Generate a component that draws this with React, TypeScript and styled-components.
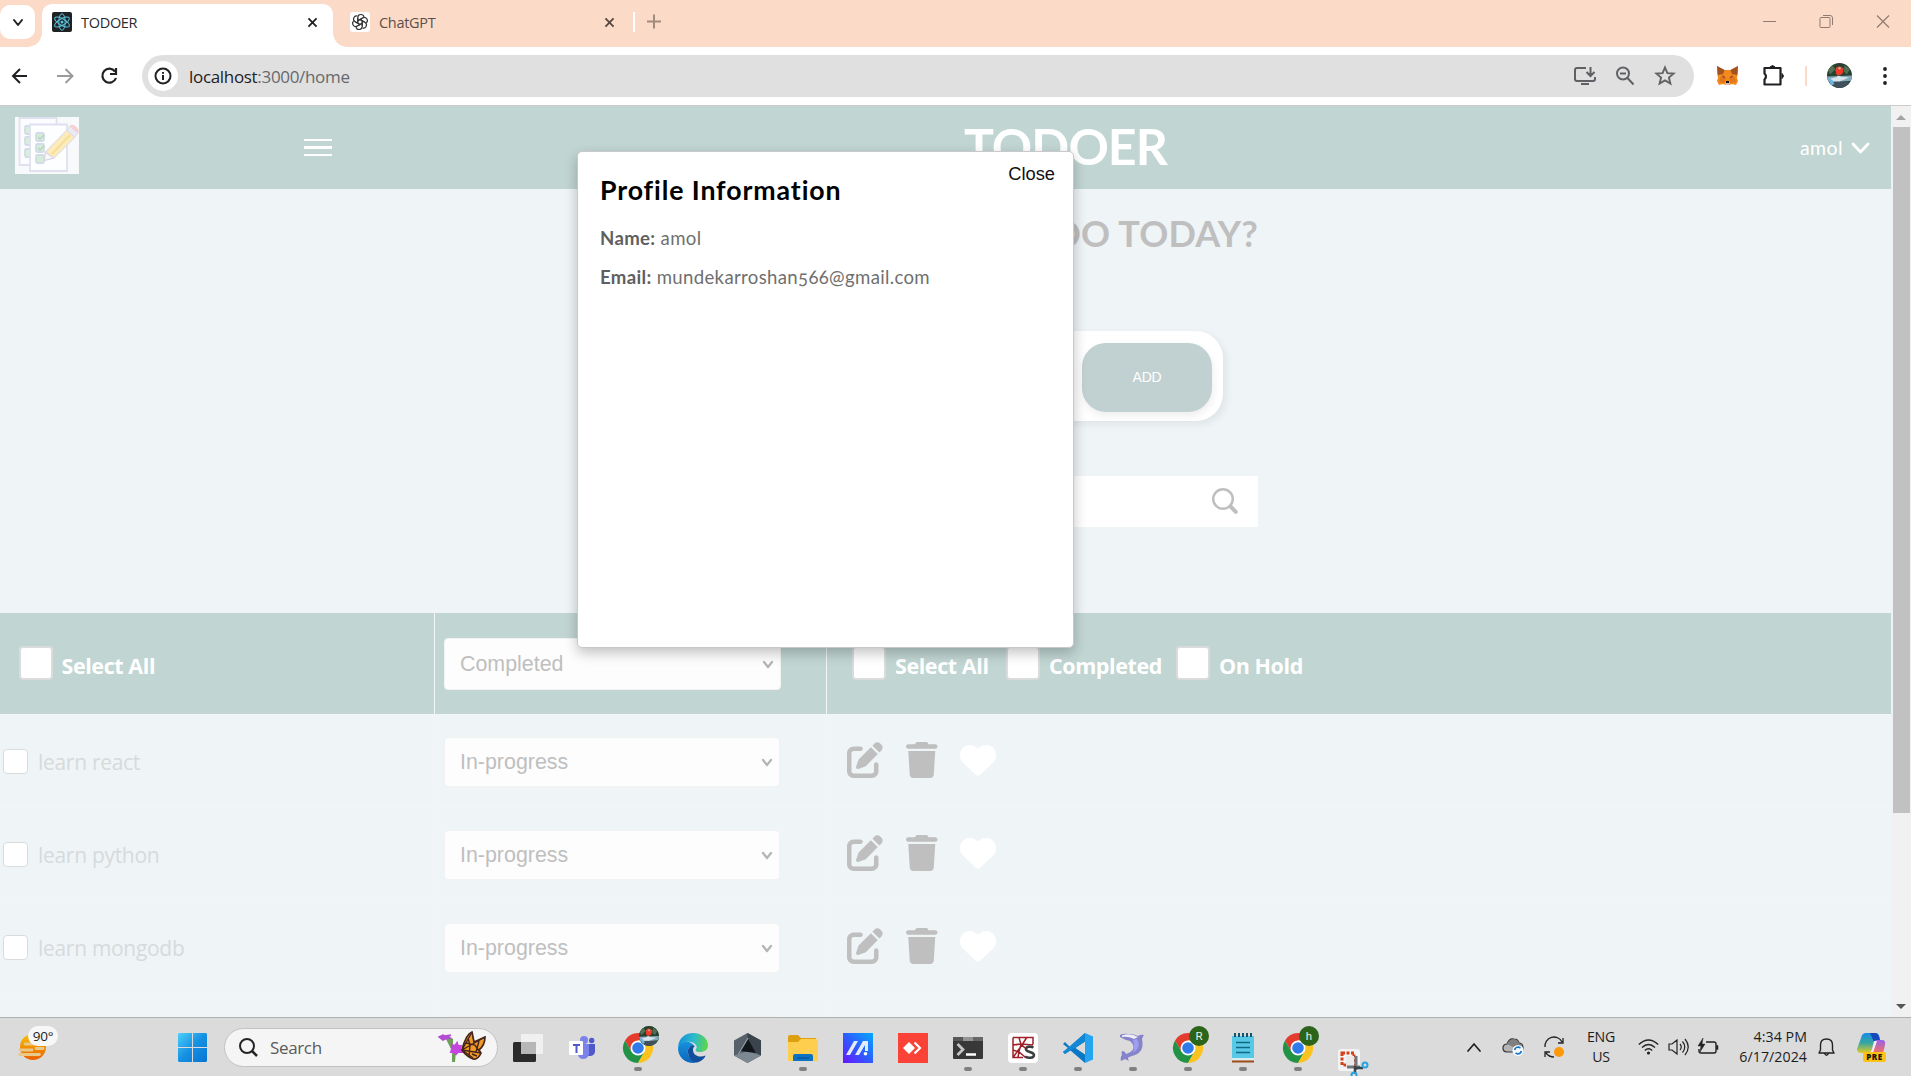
import React from "react";
import styled, { createGlobalStyle } from "styled-components";
import { FaPenToSquare, FaTrash, FaHeart } from "react-icons/fa6";

const ui = `"Open Sans", "Noto Sans", sans-serif`;
const brand = `Lato, "Open Sans", sans-serif`;
const arial = `"Liberation Sans", Arial, sans-serif`;

const GlobalStyle = createGlobalStyle`
  * { box-sizing: border-box; }
  html, body { margin: 0; padding: 0; overflow: hidden; }
  h1, h2, p { margin: 0; }
  svg { display: block; flex: none; overflow: visible; }
`;

const Screen = styled.div`
  width: 1911px;
  height: 1076px;
  display: flex;
  flex-direction: column;
  overflow: hidden;
  background: #fff;
  font-family: ${ui};
`;

/* ---------- Browser chrome ---------- */

const TabStrip = styled.div`
  height: 47px;
  flex: none;
  display: flex;
  align-items: flex-start;
  background: #fcdac8;
`;

const TabMenu = styled.div`
  width: 35px;
  height: 34px;
  margin: 5px 7px 0 0;
  border-radius: 10px;
  background: #fff;
  display: flex;
  align-items: center;
  justify-content: center;
`;

const Tab = styled.div<{ $active?: boolean }>`
  position: relative;
  width: ${(p) => (p.$active ? 291 : 300)}px;
  height: 43px;
  margin-top: 4px;
  padding: 0 ${(p) => (p.$active ? 16 : 19)}px 7px ${(p) => (p.$active ? 10 : 17)}px;
  display: flex;
  align-items: center;
  gap: 9px;
  border-radius: 10px 10px 0 0;
  background: ${(p) => (p.$active ? "#fff" : "transparent")};
  color: ${(p) => (p.$active ? "#2a2a2d" : "#5c4f48")};
  font-size: 14.5px;
  letter-spacing: -0.3px;

  &::before,
  &::after {
    content: ${(p) => (p.$active ? '""' : "none")};
    position: absolute;
    bottom: 0;
    width: 14px;
    height: 14px;
  }
  &::before {
    left: -14px;
    background: radial-gradient(circle at 0 0, transparent 13.5px, #fff 14px);
  }
  &::after {
    right: -14px;
    background: radial-gradient(circle at 100% 0, transparent 13.5px, #fff 14px);
  }
`;

const TabTitle = styled.span`
  flex: 1;
`;

const TabDivider = styled.div`
  width: 2px;
  height: 20px;
  margin: 12px 12px 0 0;
  background: #fff;
`;

const NewTab = styled.div`
  padding-top: 14px;
`;

const WindowButtons = styled.div`
  margin-left: auto;
  padding: 14px 21px 0 0;
  display: flex;
  gap: 42px;
`;

const Toolbar = styled.div`
  height: 59px;
  flex: none;
  display: flex;
  align-items: center;
  padding: 0 17px 1px 8px;
  border-bottom: 1px solid #c9cccb;
  background: #fff;
`;

const NavButtons = styled.div`
  width: 134px;
  display: flex;
  gap: 20.5px;
`;

const AddressBar = styled.div`
  width: 1552px;
  height: 42px;
  padding: 0 18px 0 6px;
  border-radius: 21px;
  background: #e0e0e0;
  display: flex;
  align-items: center;
`;

const InfoBadge = styled.div`
  width: 30px;
  height: 30px;
  border-radius: 50%;
  margin-right: 11px;
  background: #fff;
  display: flex;
  align-items: center;
  justify-content: center;
`;

const Url = styled.span`
  flex: 1;
  padding-top: 2px;
  font-size: 17px;
  letter-spacing: -0.32px;
  color: #1f2023;
  span { color: #66696d; }
`;

const AddressIcons = styled.div`
  display: flex;
  align-items: center;
  gap: 19px;
`;

const Extensions = styled.div`
  flex: 1;
  padding-left: 23px;
  display: flex;
  align-items: center;
`;

const ExtensionDivider = styled.div`
  width: 2px;
  height: 20px;
  margin: 0 20px 0 21px;
  background: #fcdac8;
`;

const Spacer = styled.div<{ $w: number }>`
  flex: none;
  width: ${(p) => p.$w}px;
`;

/* ---------- Page ---------- */

const Viewport = styled.div`
  position: relative;
  height: 911px;
  flex: none;
  display: flex;
  overflow: hidden;
  background: #eff4f7;
`;

const Page = styled.main`
  width: 1891px;
  height: 911px;
  overflow: hidden;
`;

const Header = styled.header`
  height: 83px;
  display: flex;
  align-items: center;
  padding: 0 22px 4px 15px;
  background: #c1d5d2;
  color: #fff;
`;

const Menu = styled.div`
  width: 28px;
  height: 17px;
  margin: 4px 0 0 225px;
  border: solid #fff;
  border-width: 2px 0;
  display: flex;
  align-items: center;
  &::after {
    content: "";
    width: 28px;
    height: 3px;
    background: #fff;
  }
`;

const Brand = styled.h1`
  margin-left: 632px;
  font: 700 50px/60px ${brand};
  letter-spacing: -0.95px;
  white-space: nowrap;
`;

const Account = styled.div`
  margin-left: auto;
  display: flex;
  align-items: center;
  gap: 9px;
  padding-top: 4px;
  font: 400 19.5px/24px ${brand};
  letter-spacing: 0.4px;
`;

const Intro = styled.section`
  height: 424px;
  padding-right: 633px;
  display: flex;
  flex-direction: column;
  align-items: flex-end;
`;

const Prompt = styled.h2`
  margin: 22px 0 75px 0;
  font: 700 36px/45px ${brand};
  letter-spacing: 0.2px;
  color: #bfbfbf;
`;

const AddBar = styled.div`
  width: 560px;
  height: 90px;
  margin-right: 35px;
  padding: 12px 11px 0 0;
  display: flex;
  justify-content: flex-end;
  align-items: flex-start;
  border-radius: 27px;
  background: #fff;
  box-shadow: 3px 3px 9px rgba(0, 0, 0, 0.07);
`;

const AddButton = styled.button`
  width: 130px;
  height: 69px;
  padding: 0 0 2px;
  border: 0;
  border-radius: 24px;
  background: #c1d0d0;
  box-shadow: 1px 4px 8px rgba(0, 0, 0, 0.07);
  color: #fff;
  font: 400 14px ${arial};
  letter-spacing: -0.2px;
`;

const SearchField = styled.div`
  width: 620px;
  height: 51px;
  margin-top: 55px;
  padding: 12px 20px 0 0;
  display: flex;
  justify-content: flex-end;
  background: #fff;
`;

const Grid = styled.div<{ $head?: boolean }>`
  height: ${(p) => (p.$head ? 101.5 : 93)}px;
  display: grid;
  grid-template-columns: 435px 392px 1064px;
  background: ${(p) => (p.$head ? "#c1d5d2" : "transparent")};
  border-bottom: 1px solid ${(p) => (p.$head ? "#f5f7f7" : "#f3f5f7")};
`;

const Cell = styled.div<{ $pad: string; $gap?: number; $line?: string }>`
  display: flex;
  align-items: flex-start;
  gap: ${(p) => p.$gap || 0}px;
  padding: ${(p) => p.$pad};
  border-right: ${(p) => (p.$line ? `1px solid ${p.$line}` : "0")};
`;

const Check = styled.span<{ $size: number }>`
  flex: none;
  width: ${(p) => p.$size}px;
  height: ${(p) => p.$size}px;
  border: ${(p) => (p.$size > 30 ? 2 : 1.5)}px solid #dadcdc;
  border-radius: 4px;
  background: #fff;
`;

const HeadLabel = styled.label<{ $w: number }>`
  width: ${(p) => p.$w}px;
  padding-top: 5px;
  font: 700 21.5px/30px ${ui};
  letter-spacing: -0.42px;
  color: #fff;
  white-space: nowrap;
`;

const TaskName = styled.span`
  font: 400 21px/26px ${ui};
  letter-spacing: -0.3px;
  color: #d7dadb;
`;

const Dropdown = styled.div<{ $head?: boolean }>`
  width: ${(p) => (p.$head ? 337 : 336)}px;
  height: ${(p) => (p.$head ? 52 : 50)}px;
  padding: ${(p) => (p.$head ? 0 : 1)}px 7px 0 15px;
  border: 1px solid #f1f3f3;
  border-radius: 4px;
  background: #fdfdfd;
  display: flex;
  align-items: center;
  justify-content: space-between;
  color: #bfbfbf;
  font: 400 21.4px ${arial};
`;

const PenIcon = styled(FaPenToSquare)`
  width: 36px;
  height: 36px;
  color: #bfbfbf;
`;

const TrashIcon = styled(FaTrash)`
  width: 31.5px;
  height: 36px;
  color: #bfbfbf;
`;

const HeartIcon = styled(FaHeart)`
  width: 36px;
  height: 36px;
  color: #fff;
`;

const ScrollTrack = styled.div`
  width: 20px;
  display: flex;
  flex-direction: column;
  align-items: center;
  background: #f1f1f1;
`;

const ScrollArrow = styled.div<{ $down?: boolean }>`
  width: 0;
  height: 0;
  margin: ${(p) => (p.$down ? "191px 0 0" : "9px 0 7px")};
  border: solid transparent;
  border-width: ${(p) => (p.$down ? "5px 5px 0" : "0 5px 5px")};
  border-top-color: ${(p) => (p.$down ? "#555" : "transparent")};
  border-bottom-color: ${(p) => (p.$down ? "transparent" : "#a3a3a3")};
`;

const ScrollThumb = styled.div`
  width: 17px;
  height: 686px;
  background: #c1c1c1;
`;

/* ---------- Profile dialog ---------- */

const Dialog = styled.section`
  position: absolute;
  left: 577px;
  top: 45px;
  width: 497px;
  height: 497px;
  padding: 22px;
  border: 1px solid #c9c9c9;
  border-radius: 5px;
  background: #fff;
  box-shadow: 0 5px 13px rgba(0, 0, 0, 0.24);
`;

const DialogTitle = styled.h2`
  font: 700 26.7px/33px ${brand};
  letter-spacing: 0.9px;
  color: #000;
  margin-bottom: 18px;
`;

const Detail = styled.p`
  margin-bottom: 13px;
  font: 400 18.6px/26px ${brand};
  font-variant-numeric: oldstyle-nums;
  letter-spacing: 0.33px;
  color: #6f6f6f;
  b { font-weight: 700; color: #5f5f5f; }
`;

const CloseButton = styled.button`
  position: absolute;
  top: 10px;
  right: 18px;
  padding: 0;
  border: 0;
  background: none;
  color: #111;
  font: 400 18.3px/24px ${arial};
`;

/* ---------- Taskbar ---------- */

const Taskbar = styled.footer`
  height: 59px;
  flex: none;
  display: flex;
  align-items: center;
  border-top: 1px solid #aeb0b1;
  background: #dbdbdb;
  color: #1d1d1d;
`;

const Weather = styled.div`
  position: relative;
  width: 160px;
  height: 58px;
  padding: 16px 0 0 18px;
  margin-right: 18px;
`;

const Temperature = styled.span`
  position: absolute;
  left: 28px;
  top: 8px;
  width: 30px;
  height: 20px;
  border-radius: 10px;
  background: #f7f7f7;
  font-size: 13.5px;
  line-height: 20px;
  letter-spacing: -0.3px;
  text-align: center;
`;

const TaskSearch = styled.div`
  width: 274px;
  height: 39px;
  margin: 0 2px 0 17px;
  padding: 0 11px 0 14px;
  border: 1px solid #c2c2c2;
  border-radius: 20px;
  background: #f5f5f5;
  display: flex;
  align-items: center;
  font-size: 17px;
  letter-spacing: -0.35px;
  color: #5b5b5b;
  span { flex: 1; padding-left: 12px; }
`;

const TaskItem = styled.div<{ $running?: boolean; $low?: boolean }>`
  position: relative;
  width: 55px;
  height: 58px;
  flex: none;
  display: flex;
  justify-content: center;
  padding-top: ${(p) => (p.$low ? 31 : 15)}px;
  &::after {
    content: ${(p) => (p.$running ? '""' : "none")};
    position: absolute;
    bottom: 5px;
    width: 8px;
    height: 4px;
    border-radius: 2px;
    background: #808080;
  }
`;

const ProfileBadge = styled.span`
  position: absolute;
  right: 6px;
  top: 8px;
  width: 20px;
  height: 20px;
  border-radius: 50%;
  background: #2c651a;
  color: #e8f0e4;
  font: 400 11.5px/20px "Roboto", sans-serif;
  text-align: center;
`;

const Tray = styled.div`
  margin-left: auto;
  padding-right: 24px;
  display: flex;
  align-items: center;
`;

const TrayText = styled.div<{ $right?: boolean; $w: number }>`
  width: ${(p) => p.$w}px;
  font-size: 14.2px;
  line-height: 20px;
  letter-spacing: ${(p) => (p.$right ? 0.05 : -0.3)}px;
  text-align: ${(p) => (p.$right ? "right" : "center")};
  white-space: nowrap;
`;

/* ---------- Drawings ---------- */

const CloseX = ({ color, size = 9, w = 2 }: { color: string; size?: number; w?: number }) => (
  <svg width={size} height={size} viewBox="0 0 10 10" stroke={color} strokeWidth={w}>
    <path d="M.5.5l9 9M9.5.5l-9 9" />
  </svg>
);

const ReactMark = () => (
  <svg width="20" height="20" viewBox="0 0 20 20" fill="none" stroke="#58c4dc" strokeWidth="1">
    <rect width="20" height="20" rx="2" fill="#202124" stroke="none" />
    {[0, 60, 120].map((a) => (
      <ellipse key={a} cx="10" cy="10" rx="8.3" ry="3.2" transform={`rotate(${a + 30} 10 10)`} />
    ))}
    <circle cx="10" cy="10" r="1.5" fill="#58c4dc" stroke="none" />
  </svg>
);

const ChatMark = () => (
  <svg width="20" height="20" viewBox="0 0 20 20" fill="none" stroke="#333" strokeWidth="1.15">
    <rect width="20" height="20" rx="3" fill="#fff" stroke="none" />
    {[0, 60, 120, 180, 240, 300].map((a) => (
      <path key={a} transform={`rotate(${a} 10 10)`} d="M7.8 11.3V5.7c0-4 5.4-4.2 6.1-.8M7.8 8.7l4.8-2.8" />
    ))}
  </svg>
);

const Avatar = ({ size }: { size: number }) => (
  <svg width={size} height={size} viewBox="0 0 24 24">
    <clipPath id="avatarClip"><circle cx="12" cy="12" r="12" /></clipPath>
    <g clipPath="url(#avatarClip)">
      <rect width="24" height="24" fill="#27402f" />
      <path d="M0 5l5-3 3 4-5 5zM17 2l5 4-3 5-3-3z" fill="#4f7055" />
      <path d="M0 13l24-1v5l-24 2z" fill="#86a9bb" />
      <path d="M3 15l8-2 10 1-7 3-10 1z" fill="#d4e4ee" />
      <path d="M2 18h20v6H2z" fill="#40505c" />
      <path d="M1 15l4 1 2 4-3 2z" fill="#6cb2dc" />
      <path d="M9 4l3-1 4 2-1 5-3 2-3-1-1-4z" fill="#ee3a26" />
      <circle cx="12" cy="5" r="1.2" fill="#b4b3a6" />
      <path d="M10 12l3 1-1 5-2-1z" fill="#dce5ea" />
    </g>
  </svg>
);

const Fox = () => (
  <svg width="21" height="19" viewBox="0 0 21 19">
    <path d="M0 0l7.5 4h6L21 0v7l-1 5 1 3-2 4-4-1-3 1H9l-3-1-4 1-2-4 1-3-1-5z" fill="#f28a1d" />
    <path d="M0 0l7.5 4-1.5 4-5 1zM21 0l-7.5 4L15 8l5 1z" fill="#a2521f" />
    <path d="M6 8l3 4-1 5-6-1 1-4zM15 8l-3 4 1 5 6-1-1-4z" fill="#e5761b" />
    <path d="M5 10l3 1-1 1zM16 10l-3 1 1 1z" fill="#493a38" />
    <path d="M8 17l1-2h3l1 2-1 2H9z" fill="#d5bfb2" />
    <path d="M9 15h3v2H9z" fill="#161616" />
  </svg>
);

const NotebookLogo = () => (
  <svg width="64" height="57" viewBox="0 0 64 57" fill="none" stroke="#e0e0f1" strokeWidth="1.8">
    <rect width="64" height="57" fill="#f8f9fa" stroke="none" />
    <path d="M4.500 1h37v47h-37z" fill="#fbfcff" />
    {[9, 20, 32].map((y) => <rect key={y} x="10" y={y} width="7" height="8" rx="1.500" fill="#d8f0da" stroke="#d3dae8" />)}
    <path d="M15 7.500h37v46.500H15z" fill="#fdfeff" />
    {[16, 27, 38].map((y, i) => (
      <g key={y}>
        <rect x="21" y={y} width="8" height="8" rx="1.500" fill="#d4eed6" stroke="#d3dae8" />
        {i < 2 && <path d="M23 4l2 2 4-4" transform={`translate(0 ${y})`} stroke="#b9d3c0" strokeWidth="1.500" />}
      </g>
    ))}
    <path d="M30.500 35L52 13l8 7-21 21-9 2z" fill="#fdebb8" stroke="#e6dfe0" strokeWidth="1.200" />
    <path d="M52 13l3-4 8 7-3.500 4z" fill="#ebeaf5" stroke="#dbdaeb" strokeWidth="1" />
    <path d="M55 9q3-2 6 1t2 6z" fill="#fbd0cd" stroke="#ecd2da" strokeWidth="1" />
    <path d="M37 37l18-19" stroke="#f6de9d" strokeWidth="2.200" />
    <path d="M30.500 35l8 6-9 2.500z" fill="#fdf8f3" stroke="#d8d6ea" strokeWidth="1.200" />
  </svg>
);

const Chevron = ({ w, h, color, stroke, up }: { w: number; h: number; color: string; stroke: number; up?: boolean }) => (
  <svg width={w} height={h} fill="none" stroke={color} strokeWidth={stroke} strokeLinecap="round" strokeLinejoin="round">
    <path d={up ? `M1 ${h - 1}L${w / 2} 1L${w - 1} ${h - 1}` : `M1 1L${w / 2} ${h - 1}L${w - 1} 1`} />
  </svg>
);

const ChromeLogo = () => (
  <svg width="30" height="30" viewBox="0 0 30 30">
    <path d="M2 7.5A15 15 0 0 1 28 7.5H15L8.5 18.7z" fill="#e33b2e" />
    <path d="M2 7.5A15 15 0 0 0 15 30l6.5-11.2h-13z" fill="#229346" />
    <path d="M28 7.5A15 15 0 0 1 15 30l6.500-11.200L15 7.500z" fill="#fcc31e" />
    <circle cx="15" cy="15" r="7.5" fill="#fff" />
    <circle cx="15" cy="15" r="5.8" fill="#2f7bea" />
  </svg>
);

const EdgeLogo = () => (
  <svg width="30" height="30" viewBox="0 0 30 30">
    <defs>
      <linearGradient id="edgeTop" x1="0" y1=".4" x2="1" y2=".5">
        <stop stopColor="#138fd8" /><stop offset=".5" stopColor="#2cb9ce" /><stop offset="1" stopColor="#5ed749" />
      </linearGradient>
      <linearGradient id="edgeLeft" x1="0" y1="0" x2="0" y2="1">
        <stop stopColor="#1592dc" /><stop offset="1" stopColor="#0b65bb" />
      </linearGradient>
    </defs>
    <path d="M0 14C1 5 7 0 15 0c9 0 15 6 15 12 0 5-4 7-8 7-4 0-5-1-4-3 2-2 0-6-5-7C7 8 2 10 0 14z" fill="url(#edgeTop)" />
    <path d="M0 15C1 10 6 8 11 9c3 1 5 3 6 5-4-3-8 1-7 6 1 5 4 8 8 10C8 31 0 25 0 15z" fill="url(#edgeLeft)" />
    <path d="M14 12.500c-3 1-4.500 4-4 7.500 1 6 5 10 9 9.500 4.500-1 8-4.500 8.500-7-5 2.500-12.500.5-12.500-5.500 0-2 .5-3 1.500-4z" fill="#104f9c" />
  </svg>
);

const TaskViewIcon = () => (
  <svg width="30" height="30" viewBox="0 0 30 30">
    <rect y="9" width="23" height="20" rx="1.5" fill="#2b2b2b" />
    <rect x="8" y="1" width="22" height="20" rx="1" fill="#f0f0f0" />
    <path d="M8 9h15v12H9q-1 0-1-1z" fill="#b7b7b7" />
  </svg>
);

const TeamsIcon = () => (
  <svg width="27" height="30" viewBox="0 0 27 30">
    <circle cx="15" cy="7" r="4" fill="#7b83eb" />
    <circle cx="22.7" cy="7.5" r="2.7" fill="#5059c9" />
    <path d="M19 11h7v8q-1 4-5 4h-2z" fill="#5059c9" />
    <path d="M9 11h11v10q-1 5-6 5-4 0-5-4z" fill="#7b83eb" />
    <rect y="8" width="14" height="14" rx="1" fill="#fff" />
    <path d="M4 11h7v2H8.5v7h-2v-7H4z" fill="#5059c9" />
  </svg>
);

const ArmouryIcon = () => (
  <svg width="27" height="30" viewBox="0 0 27 30">
    <path d="M13.5 0L27 7.5v15L13.5 30 0 22.5v-15z" fill="#56616b" />
    <path d="M13.5 0L27 7.500v15L13.500 15z" fill="#3b444c" />
    <path d="M0 22.500l13.500-4.500L27 22.500 13.500 30z" fill="#7c8892" />
    <path d="M14 6l8 14-16-2z" fill="#12171c" />
    <path d="M14 5L4.500 21" stroke="#8d99a3" strokeWidth="1.300" />
  </svg>
);

const FolderIcon = () => (
  <svg width="30" height="30" viewBox="0 0 30 30">
    <path d="M0 4q0-2 2-2h8l3 3h15v6H0z" fill="#dda011" />
    <path d="M0 9h10l3-3h15q2 0 2 2v20H0z" fill="#fecf4e" />
    <path d="M5 28v-5q0-2 2-2h16q2 0 2 2v5z" fill="#0c72c4" />
    <path d="M9 25h12" stroke="#064b91" />
  </svg>
);

const AsusIcon = () => (
  <svg width="30" height="30" viewBox="0 0 30 30">
    <defs><linearGradient id="asus" x1="0" y1="1" x2="1" y2="0"><stop stopColor="#6815ff" /><stop offset=".55" stopColor="#2865ff" /><stop offset="1" stopColor="#05a9ff" /></linearGradient></defs>
    <rect width="30" height="30" fill="url(#asus)" />
    <path d="M3 22L11 8h4L7 22zM12 22l8-14h5v10h-3v-6l-6 10z" fill="#e2ebff" />
    <circle cx="22.5" cy="20.7" r="1.8" fill="#fff" />
  </svg>
);

const AnyDeskIcon = () => (
  <svg width="30" height="30" viewBox="0 0 30 30">
    <rect width="30" height="30" fill="#fb4237" />
    <path d="M5 15l6-6 6 6-6 6z" fill="#fff" />
    <path d="M16.500 9.500L22 15l-5.500 5.500" stroke="#fff" strokeWidth="2.200" fill="none" />
  </svg>
);

const TerminalIcon = () => (
  <svg width="30" height="30" viewBox="0 0 30 30">
    <rect y="4" width="30" height="22" rx="1" fill="#383838" />
    <path d="M0 5q0-1 1-1h9v4H0z" fill="#585858" /><path d="M10 4h10v4H10z" fill="#949494" /><path d="M20 4h10v4H20z" fill="#676767" />
    <path d="M4.500 11l5.500 5.500L4.500 22" fill="none" stroke="#c6c6c6" strokeWidth="2.700" />
    <path d="M13 21.500h10" stroke="#fff" strokeWidth="2.500" />
  </svg>
);

const SpyderIcon = () => (
  <svg width="30" height="30" viewBox="0 0 30 30" fill="none">
    <rect width="30" height="30" rx="4" fill="#fff" />
    <path d="M5 4.500h20v7M5 4.500v20h10M5 12l8-1 12 1M5 24.500L14 12l5-8M11 4.500l2 7-2 7-1 6M5 17l6 2 6 5M13 11l4 4" stroke="#9f2028" strokeWidth="1.500" />
    <path d="M17 13h9v12h-9z" fill="#fff" />
    <path d="M25.500 14.500c-3-1.500-8-1-7.500 2 .5 3 8 2 8 5.500s-6 3.500-9 1.500" stroke="#3b3d40" strokeWidth="2.500" />
  </svg>
);

const CodeIcon = () => (
  <svg width="30" height="30" viewBox="0 0 30 30">
    <path d="M22 0L7 14l-5-5-2 2 5 4-5 4 2 2 5-4 15 13V21.500L12.500 15 22 8.500z" fill="#0a79c5" />
    <path d="M22 0l8 3.500v23L22 30z" fill="#25a5ef" />
    <path d="M2 21l20-12.500V0L0 19z" fill="#1287d4" />
  </svg>
);

const DolphinIcon = () => (
  <svg width="25" height="30" viewBox="0 0 25 30">
    <path d="M0 2q4-2 9-1 5 0 9 2 3-2 6-1-1 1-2 4c2 9-1 15-10 17-4 1-5 2-3 5l-4-2-4 2q-1-4 1-6-1-2 0-4 3 0 4 3c8-2 10-8 4-13Q5 7 0 4z" fill="#8583cb" />
    <path d="M2 2.500q8-3 16 1.500l-4 2Q8 3 2 4z" fill="#edeef6" />
    <path d="M17 6q5 8-4 14 2-7 0-13z" fill="#9e9df0" />
  </svg>
);

const NotepadIcon = () => (
  <svg width="24" height="30" viewBox="0 0 24 30">
    <path d="M1 3h22v24H1z" fill="#57c8e5" />
    <path d="M1 25h22v2H1z" fill="#d7edf3" /><path d="M1 28.500h22" stroke="#9d4d17" strokeWidth="2" />
    <path d="M5 9.500h14M5 14.500h14M5 19.500h14" stroke="#116986" strokeWidth="1.700" />
    <path d="M4 0v4M8 0v4M12 0v4M16 0v4M20 0v4" stroke="#17546a" strokeWidth="2" />
  </svg>
);

const SnipIcon = () => (
  <svg width="30" height="28" viewBox="0 0 30 28">
    <rect x="0" y="0" width="22" height="22" rx="3" fill="#f2f3f5" />
    <rect x="4" y="4" width="12" height="12" fill="none" stroke="#d64218" strokeWidth="3" strokeDasharray="3 1.500" />
    <path d="M8 7h8v10H8z" fill="#e9e9e9" /><path d="M18 7v14M9 18h13" stroke="#70767b" strokeWidth="3" />
    <path d="M17 19h8M17 17v8" stroke="#3a4249" strokeWidth="2.500" />
    <circle cx="27" cy="16" r="2.500" fill="none" stroke="#28a2df" strokeWidth="2" /><circle cx="16" cy="26" r="2.500" fill="none" stroke="#28a2df" strokeWidth="2" />
  </svg>
);

const Butterfly = () => (
  <svg width="48" height="32" viewBox="0 0 48 32">
    <path d="M8 8q4-3 7 0v6l3 6-1 11h-3V20z" fill="#6f9e58" />
    <path d="M1 6l4-2 2 1 6-1-3 2 2 1-5 1-2 1z" fill="#b44bd4" stroke="#b44bd4" strokeWidth="1.500" />
    <path d="M14 14l3 1 2-3 1 3 3 0-1 3 2 3-4 0-2 2-2-2-3 0 1-3z" fill="#c545df" stroke="#c545df" strokeWidth="2" />
    <path d="M24 19Q28 3 34 1l2 10 11-5q0 8-6 13l2 3q-3 7-8 6-6-2-11-9z" fill="#f29a27" stroke="#45251c" strokeWidth="1.700" />
    <path d="M24 19L34 1M24 19L47 6M24 19l19 3M24 19l11 8M30 7l2 7-1 12M41 10l-3 11M28 12l9 2 4 6M34 23l5 2" stroke="#45251c" strokeWidth="1.400" fill="none" />
  </svg>
);

const SunIcon = () => (
  <svg width="28" height="28" viewBox="0 0 28 28">
    <defs><linearGradient id="sun" x1="0" y1="0" x2="0" y2="1"><stop stopColor="#fac000" /><stop offset="1" stopColor="#ea6000" /></linearGradient></defs>
    <circle cx="15" cy="13" r="13" fill="url(#sun)" />
    <path d="M7 10h12M2 16h12M18 14.500h7M1.500 20.500h20" stroke="#e9c98a" strokeWidth="2.800" strokeLinecap="round" />
  </svg>
);

const WindowsLogo = () => (
  <svg width="29" height="29" viewBox="0 0 29 29">
    <defs><linearGradient id="win" gradientUnits="userSpaceOnUse" x1="0" y1="0" x2="29" y2="29"><stop stopColor="#4ad0fb" /><stop offset=".5" stopColor="#1690e2" /><stop offset="1" stopColor="#0575d3" /></linearGradient></defs>
    <path d="M1 0h13v14H0V1zM15 0h13l1 1v13H15zM0 15h14v14H1l-1-1zM15 15h14v13l-1 1H15z" fill="url(#win)" />
  </svg>
);

const Copilot = () => (
  <svg width="30" height="29" viewBox="0 0 30 29">
    <defs>
      <linearGradient id="copA" x1="0" y1="0" x2="0" y2="1"><stop stopColor="#168ce8" /><stop offset=".5" stopColor="#36a7a1" /><stop offset="1" stopColor="#e4cb22" /></linearGradient>
      <linearGradient id="copB" x1="0" y1="0" x2="0" y2="1"><stop stopColor="#9562ea" /><stop offset="1" stopColor="#fb705d" /></linearGradient>
    </defs>
    <path d="M4 5q1-5 5-5h9q3 0 4 3l1 4q-5 0-6 4l-2 6q-1 3-4 3H4q-4 0-4-4z" fill="url(#copA)" />
    <path d="M13 0h5q3 0 4 3l1 4q-4 0-6 2z" fill="#1549bc" />
    <path d="M19 7h6q4 0 3 5l-2 8H12q2-1 3-4l2-7z" fill="url(#copB)" />
    <path d="M17 8h3l-4 12h-4q2-1 3-4z" fill="#f4e8f5" />
    <rect x="6" y="19" width="23" height="10" rx="2" fill="#fcc314" />
    <text x="17.500" y="27" textAnchor="middle" fontFamily="Open Sans" fontWeight="800" fontSize="8" letterSpacing=".6" fill="#1c1600">PRE</text>
  </svg>
);

const NavIcons = () => (
  <NavButtons>
    {["#202124", "#9b9b9b"].map((c, i) => (
      <svg key={c} width="24" height="24" viewBox="0 0 24 24" fill="none" stroke={c} strokeWidth="2">
        <path d={i ? "M4 12h15M12.500 5l7 7-7 7" : "M19 12H5M12 5l-7 7 7 7"} />
      </svg>
    ))}
    <svg width="24" height="24" viewBox="0 0 24 24" fill="none" stroke="#202124" strokeWidth="2.200">
      <path d="M18 7.500A7 7 0 1 0 19 14M19 4v6h-6" />
    </svg>
  </NavButtons>
);

const tasks = ["learn react", "learn python", "learn mongodb", ""];

const taskbarApps: { icon: React.ReactNode; running?: boolean; badge?: string; photo?: boolean; low?: boolean }[] = [
  { icon: <TaskViewIcon /> },
  { icon: <TeamsIcon /> },
  { icon: <ChromeLogo />, running: true, photo: true },
  { icon: <EdgeLogo /> },
  { icon: <ArmouryIcon /> },
  { icon: <FolderIcon />, running: true },
  { icon: <AsusIcon /> },
  { icon: <AnyDeskIcon /> },
  { icon: <TerminalIcon />, running: true },
  { icon: <SpyderIcon />, running: true },
  { icon: <CodeIcon />, running: true },
  { icon: <DolphinIcon />, running: true },
  { icon: <ChromeLogo />, running: true, badge: "R" },
  { icon: <NotepadIcon />, running: true },
  { icon: <ChromeLogo />, running: true, badge: "h" },
  { icon: <SnipIcon />, low: true },
];

export default function App() {
  return (
    <Screen>
      <GlobalStyle />
      <TabStrip>
        <TabMenu><Chevron w={10} h={7} color="#202124" stroke={2} /></TabMenu>
        <Tab $active>
          <ReactMark />
          <TabTitle>TODOER</TabTitle>
          <CloseX color="#202124" />
        </Tab>
        <Tab>
          <ChatMark />
          <TabTitle>ChatGPT</TabTitle>
          <CloseX color="#56473f" />
        </Tab>
        <TabDivider />
        <NewTab>
          <svg width="14" height="15" viewBox="0 0 14 15" stroke="#a18a7e" strokeWidth="2"><path d="M0 7.500h14M7 .5v14" /></svg>
        </NewTab>
        <WindowButtons>
          <svg width="15" height="15" stroke="#8f7b71"><path d="M1 7.500h13" /></svg>
          <svg width="15" height="15" viewBox="0 0 15 15" fill="none" stroke="#8f7b71"><rect x="1" y="3.500" width="10" height="10" rx="1" /><path d="M4 1.500h7q2.500 0 2.500 2.500v7" /></svg>
          <svg width="14" height="15" stroke="#8f7b71" strokeWidth="1.200"><path d="M1 1.500l12 12M13 1.500l-12 12" /></svg>
        </WindowButtons>
      </TabStrip>

      <Toolbar>
        <NavIcons />
        <AddressBar>
          <InfoBadge>
            <svg width="18" height="18" viewBox="0 0 18 18" fill="none" stroke="#202124" strokeWidth="2"><circle cx="9" cy="9" r="7.500" /><path d="M9 8v5M9 5v1.800" /></svg>
          </InfoBadge>
          <Url>localhost<span>:3000/home</span></Url>
          <AddressIcons>
            <svg width="22" height="20" viewBox="0 0 22 20" fill="none" stroke="#5f6164" strokeWidth="2"><path d="M12 2H3q-2 0-2 2v9q0 2 2 2h16q2 0 2-2v-2M7 18h8M16.500 1v8M12.500 6l4 4 4-4" /></svg>
            <svg width="20" height="20" viewBox="0 0 20 20" fill="none" stroke="#5f6164" strokeWidth="2"><circle cx="8" cy="7.500" r="6" /><path d="M5 7.500h6M12.500 12l6 6.500" /></svg>
            <svg width="22" height="21" viewBox="0 0 22 21" fill="none" stroke="#5f6164" strokeWidth="1.900"><path d="M11 2.500l2.400 5.600 6.200.5-4.700 4 1.500 6L11 15.400l-5.400 3.200 1.500-6-4.700-4 6.200-.5z" /></svg>
          </AddressIcons>
        </AddressBar>
        <Extensions>
          <Fox />
          <Spacer $w={25} />
          <svg width="21" height="21" viewBox="0 0 21 21" fill="none" stroke="#202124" strokeWidth="2.200"><path d="M1.500 3h16v16.500h-16v-5q3-3 0-6z" strokeLinejoin="round" /><path d="M7 2q2.500-3 5 0zM19 8.500q3 2.500 0 5z" fill="#202124" strokeWidth="1" /></svg>
          <ExtensionDivider />
          <Avatar size={25} />
          <Spacer $w={31} />
          <svg width="4" height="18" fill="#202124"><circle cx="2" cy="2" r="1.900" /><circle cx="2" cy="9" r="1.900" /><circle cx="2" cy="16" r="1.900" /></svg>
        </Extensions>
      </Toolbar>

      <Viewport>
        <Page>
          <Header>
            <NotebookLogo />
            <Menu />
            <Brand>TODOER</Brand>
            <Account>amol <Chevron w={17} h={10} color="#fff" stroke={2.8} /></Account>
          </Header>
          <Intro>
            <Prompt>DO TODAY?</Prompt>
            <AddBar><AddButton>ADD</AddButton></AddBar>
            <SearchField>
              <svg width="26" height="26" viewBox="0 0 26 26" fill="none" stroke="#bfbfbf" strokeWidth="2.500"><circle cx="11" cy="11" r="9.800" /><path d="M18.500 18.500l5.300 5.300" strokeWidth="4" strokeLinecap="round" /></svg>
            </SearchField>
          </Intro>

          <Grid $head>
            <Cell $pad="33px 0 0 19px" $gap={8.5} $line="#f1f5f5">
              <Check $size={34} /><HeadLabel $w={94}>Select All</HeadLabel>
            </Cell>
            <Cell $pad="25px 0 0 9px" $line="#f1f5f5">
              <Dropdown $head>Completed<Chevron w={10} h={7} color="#b5b5b5" stroke={2.3} /></Dropdown>
            </Cell>
            <Cell $pad="33px 0 0 25px" $gap={9}>
              <Check $size={34} /><HeadLabel $w={102}>Select All</HeadLabel>
              <Check $size={34} /><HeadLabel $w={118}>Completed</HeadLabel>
              <Check $size={34} /><HeadLabel $w={90}>On Hold</HeadLabel>
            </Cell>
          </Grid>

          {tasks.map((task, i) => (
            <Grid key={i}>
              <Cell $pad="34px 0 0 3px" $gap={10} $line="#f3f5f7">
                <Check $size={25} /><TaskName>{task}</TaskName>
              </Cell>
              <Cell $pad="22px 0 0 9px" $line="#f3f5f7">
                <Dropdown>{task && "In-progress"}<Chevron w={10} h={7} color="#b5b5b5" stroke={2.3} /></Dropdown>
              </Cell>
              <Cell $pad="27px 0 0 20px" $gap={22.5}>
                <PenIcon />
                <TrashIcon />
                <HeartIcon />
              </Cell>
            </Grid>
          ))}
        </Page>

        <ScrollTrack>
          <ScrollArrow />
          <ScrollThumb />
          <ScrollArrow $down />
        </ScrollTrack>

        <Dialog>
          <DialogTitle>Profile Information</DialogTitle>
          <Detail><b>Name:</b> amol</Detail>
          <Detail><b>Email:</b> mundekarroshan566@gmail.com</Detail>
          <CloseButton>Close</CloseButton>
        </Dialog>
      </Viewport>

      <Taskbar>
        <Weather><SunIcon /><Temperature>90°</Temperature></Weather>
        <WindowsLogo />
        <TaskSearch>
          <svg width="19" height="19" viewBox="0 0 19 19" fill="none" stroke="#252525" strokeWidth="2"><circle cx="8" cy="8" r="7" /><path d="M13 13l5 5" strokeWidth="2.500" /></svg>
          <span>Search</span>
          <Butterfly />
        </TaskSearch>
        {taskbarApps.map((app, i) => (
          <TaskItem key={i} $running={app.running} $low={app.low}>
            {app.icon}
            {app.badge && <ProfileBadge>{app.badge}</ProfileBadge>}
            {app.photo && <ProfileBadge><Avatar size={20} /></ProfileBadge>}
          </TaskItem>
        ))}
        <Tray>
          <Chevron up w={14} h={9} color="#222" stroke={1.7} />
          <Spacer $w={22} />
          <svg width="21" height="18" viewBox="0 0 21 18"><path d="M4 14Q0 14 0 10t4-4Q6 0 11 1q4 0 5 4 4 0 4 5t-4 4z" fill="#b4b4b4" stroke="#333" strokeWidth="1.200" /><path d="M4 6Q6 1 11 1.500q4 0 5 4 3 0 3.500 4L10 9z" fill="#808080" /><circle cx="15" cy="12.500" r="5.500" fill="#f7fbff" /><path d="M11.500 12q1-3 4-3l2 1M18.500 13q-1 3-4 3l-2-1" fill="none" stroke="#1574c5" strokeWidth="1.600" /></svg>
          <Spacer $w={20} />
          <svg width="21" height="21" viewBox="0 0 21 21" fill="none" stroke="#222" strokeWidth="1.300"><path d="M1 10a9 9 0 0 1 17-5M19 1v5h-5M1 20v-5h5M2 16q3 4 8 4" /><circle cx="15" cy="15" r="5" fill="#fb9908" stroke="none" /></svg>
          <Spacer $w={14} />
          <TrayText $w={44}>ENG<br />US</TrayText>
          <Spacer $w={15} />
          <svg width="21" height="16" viewBox="0 0 21 16" fill="none" stroke="#222" strokeWidth="1.400"><path d="M.8 5.500q9.700-9 19.400 0M4 8.500q6.500-6 13 0M6.800 11.500q3.700-3.300 7.400 0" /><circle cx="10.500" cy="14" r="1.600" fill="#222" stroke="none" /></svg>
          <Spacer $w={9} />
          <svg width="21" height="18" viewBox="0 0 21 18" fill="none" stroke="#222" strokeWidth="1.200"><path d="M1 6h3l5-4v14l-5-4H1zM12 6q2.500 3 0 6M14.500 3.500q4.500 5.500 0 11M17 1q6.500 8 0 16" /></svg>
          <Spacer $w={9} />
          <svg width="21" height="18" viewBox="0 0 21 18" fill="none" stroke="#222" strokeWidth="1.400"><path d="M8 4h8q2 0 2 2v7q0 2-2 2H3q-2 0-2-2v-2" /><path d="M18.500 7.500h1.500v4h-1.500zM5 0L0 8h3l-1 6 5-8H4z" fill="#222" strokeWidth=".5" /></svg>
          <Spacer $w={8} />
          <TrayText $w={80} $right>4:34 PM<br />6/17/2024</TrayText>
          <Spacer $w={11} />
          <svg width="17" height="19" viewBox="0 0 17 19" fill="none" stroke="#222" strokeWidth="1.400"><path d="M2.500 12V7q0-6 6-6t6 6v5l1.500 3H1zM6.500 15.500q2 3.500 4 0" strokeLinejoin="round" /></svg>
          <Spacer $w={22} />
          <Copilot />
        </Tray>
      </Taskbar>
    </Screen>
  );
}
